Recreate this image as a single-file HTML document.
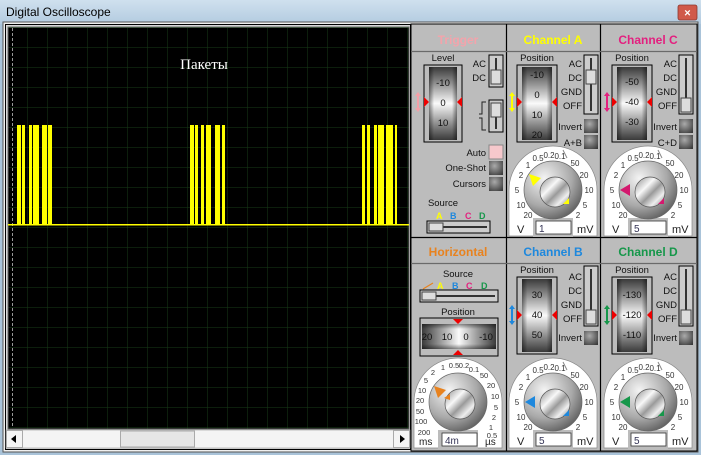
<!DOCTYPE html>
<html><head><meta charset="utf-8"><style>
html,body{margin:0;padding:0;width:701px;height:455px;overflow:hidden;background:#a8c2d8}
svg{display:block}
text{font-family:"Liberation Sans",sans-serif}
text.serif{font-family:"Liberation Serif","DejaVu Serif",serif}
</style></head><body>
<svg width="701" height="455" viewBox="0 0 701 455" xmlns="http://www.w3.org/2000/svg">
<defs>
<linearGradient id="tb" x1="0" y1="0" x2="0" y2="1"><stop offset="0" stop-color="#cfe0ee"/><stop offset="1" stop-color="#b3cbe0"/></linearGradient>
<linearGradient id="dv" x1="0" y1="0" x2="0" y2="1"><stop offset="0" stop-color="#3a3a3a"/><stop offset=".25" stop-color="#999"/><stop offset=".5" stop-color="#fafafa"/><stop offset=".75" stop-color="#999"/><stop offset="1" stop-color="#3a3a3a"/></linearGradient>
<linearGradient id="dh" x1="0" y1="0" x2="1" y2="0"><stop offset="0" stop-color="#3a3a3a"/><stop offset=".25" stop-color="#999"/><stop offset=".5" stop-color="#fafafa"/><stop offset=".75" stop-color="#999"/><stop offset="1" stop-color="#3a3a3a"/></linearGradient>
<linearGradient id="edge" x1="0" y1="0" x2="1" y2="0"><stop offset="0" stop-color="#000" stop-opacity=".45"/><stop offset=".18" stop-color="#000" stop-opacity="0"/><stop offset=".82" stop-color="#000" stop-opacity="0"/><stop offset="1" stop-color="#000" stop-opacity=".45"/></linearGradient>
<linearGradient id="edgev" x1="0" y1="0" x2="0" y2="1"><stop offset="0" stop-color="#000" stop-opacity=".45"/><stop offset=".2" stop-color="#000" stop-opacity="0"/><stop offset=".8" stop-color="#000" stop-opacity="0"/><stop offset="1" stop-color="#000" stop-opacity=".45"/></linearGradient>
<radialGradient id="kn" cx=".35" cy=".3" r=".8"><stop offset="0" stop-color="#f4f4f4"/><stop offset=".6" stop-color="#a8a8a8"/><stop offset="1" stop-color="#555"/></radialGradient>
<linearGradient id="kc" x1="0" y1="0" x2="1" y2="1"><stop offset="0" stop-color="#888"/><stop offset=".35" stop-color="#f8f8f8"/><stop offset=".55" stop-color="#9a9a9a"/><stop offset=".75" stop-color="#eee"/><stop offset="1" stop-color="#777"/></linearGradient>
<radialGradient id="btn" cx=".4" cy=".35" r=".8"><stop offset="0" stop-color="#aaa"/><stop offset="1" stop-color="#3a3a3a"/></radialGradient>
<pattern id="grid" width="20" height="20" patternUnits="userSpaceOnUse" x="8" y="8"><path d="M20 0V20M0 20H20" stroke="#173d17" stroke-width="1" fill="none"/></pattern>
<g id="vk">
 <path d="M-44 46V0A44 44 0 0 1 44 0V46Z" fill="#fff" stroke="#888" stroke-width=".7"/>
 <rect x="-20" y="28" width="40" height="19" fill="#bcbcbc"/>
 <path d="M10 -40 L14 -32" stroke="#888"/>
 <g font-size="8" text-anchor="middle" fill="#333">
 <text x="-25" y="28">20</text><text x="-32" y="18">10</text><text x="-36" y="3">5</text><text x="-32" y="-12">2</text><text x="-25" y="-22">1</text><text x="-15" y="-29">0.5</text><text x="-4" y="-32">0.2</text><text x="7" y="-31">0.1</text><text x="22" y="-24">50</text><text x="31" y="-12">20</text><text x="36" y="3">10</text><text x="32" y="18">5</text><text x="25" y="28">2</text>
 </g>
 <g font-size="11" fill="#222"><text x="-36" y="43">V</text><text x="24" y="43">mV</text></g>
 <circle r="29" fill="url(#kn)" stroke="#666" stroke-width=".7"/>
 <circle cx="2" cy="2" r="15" fill="url(#kc)" stroke="#555" stroke-width=".7"/>
 <rect x="-17" y="31" width="35" height="13" fill="#fff" stroke="#333" stroke-width=".8"/>
</g>
</defs>

<rect x="0" y="0" width="701" height="455" fill="#a9c3d9"/>
<rect x="0" y="0" width="701" height="24" fill="url(#tb)"/>
<text x="6" y="16" font-size="12" fill="#000">Digital Oscilloscope</text>
<rect x="678" y="5" width="19" height="15" rx="2" fill="#d0594a" stroke="#8a3a30" stroke-width=".8"/>
<text x="687.5" y="16.5" font-size="11" fill="#fff" text-anchor="middle" font-weight="bold">×</text>
<rect x="3" y="22" width="695" height="430" fill="#f0f0f0" stroke="#555" stroke-width="1"/>
<rect x="5.5" y="24.5" width="405" height="425" fill="#d8d8d8" stroke="#000" stroke-width="1"/>

<rect x="8" y="27" width="401" height="402" fill="#000"/>
<rect x="8" y="27" width="401" height="402" fill="url(#grid)"/>
<rect x="8" y="27" width="401" height="402" fill="none" stroke="#6a6a6a"/>
<line x1="12.5" y1="28" x2="12.5" y2="428" stroke="#999" stroke-dasharray="3 2"/>
<text class="serif" x="204" y="69" font-size="15" fill="#fff" text-anchor="middle">Пакеты</text>
<g fill="#ffff00">
<rect x="17" y="125" width="4" height="99"/><rect x="22" y="125" width="3" height="99"/><rect x="29" y="125" width="3" height="99"/><rect x="33" y="125" width="6" height="99"/><rect x="42" y="125" width="5" height="99"/><rect x="48" y="125" width="4" height="99"/>
<rect x="190" y="125" width="4" height="99"/><rect x="195" y="125" width="3" height="99"/><rect x="201" y="125" width="3" height="99"/><rect x="206" y="125" width="5" height="99"/><rect x="215" y="125" width="5" height="99"/><rect x="222" y="125" width="3" height="99"/>
<rect x="362" y="125" width="3" height="99"/><rect x="367" y="125" width="3" height="99"/><rect x="374" y="125" width="3" height="99"/><rect x="378" y="125" width="6" height="99"/><rect x="386" y="125" width="7" height="99"/><rect x="395" y="125" width="2" height="99"/>
<rect x="8" y="224" width="401" height="1.5"/>
</g>

<rect x="6" y="430" width="404" height="18" fill="#f4f4f4" stroke="#999" stroke-width=".6"/>
<rect x="6.5" y="430.5" width="16" height="17" fill="#f4f4f4" stroke="#aaa"/>
<path d="M11 439 L16 435 V443Z" fill="#000"/>
<rect x="393.5" y="430.5" width="16" height="17" fill="#f4f4f4" stroke="#aaa"/>
<path d="M405 439 L400 435 V443Z" fill="#000"/>
<rect x="120.5" y="431" width="74" height="16" fill="#e6e6e6" stroke="#aaa"/>

<rect x="411" y="24" width="286" height="427" fill="#bcbcbc" stroke="#000"/>
<g stroke="#000" stroke-width="1.2"><line x1="506.5" y1="24" x2="506.5" y2="451"/><line x1="600.5" y1="24" x2="600.5" y2="451"/><line x1="411" y1="237.5" x2="697" y2="237.5"/></g>
<g stroke="#6a6a6a" stroke-width="1.2"><line x1="411" y1="51.5" x2="697" y2="51.5"/><line x1="411" y1="263.5" x2="697" y2="263.5"/></g>
<g font-size="12" font-weight="bold" text-anchor="middle">
<text x="458" y="44" fill="#f4a3ab">Trigger</text>
<text x="553" y="44" fill="#ffff00">Channel A</text>
<text x="648" y="44" fill="#e3207f">Channel C</text>
<text x="458" y="256" fill="#e8821e">Horizontal</text>
<text x="553" y="256" fill="#1e88dd">Channel B</text>
<text x="648" y="256" fill="#16974a">Channel D</text>
</g>

<g font-size="9.5" fill="#111">
<text x="443" y="61" text-anchor="middle">Level</text>
<rect x="424" y="65" width="38" height="77" fill="#bcbcbc" stroke="#000"/>
<rect x="429" y="67" width="28" height="73" fill="url(#dv)"/><rect x="429" y="67" width="28" height="73" fill="url(#edge)"/>
<g text-anchor="middle"><text x="443" y="86">-10</text><text x="443" y="106">0</text><text x="443" y="126">10</text></g>
<path d="M424 97 L429 102 L424 107Z M462 97 L457 102 L462 107Z" fill="#e00"/>
<path d="M418 92 L421 96 H419 V108 H421 L418 112 L415 108 H417 V96 H415Z" fill="#f3a0a8"/>
<text x="486" y="67" text-anchor="end">AC</text><text x="486" y="81" text-anchor="end">DC</text>
<rect x="489" y="55" width="14" height="32" fill="#ccc" stroke="#000"/><line x1="496" y1="58" x2="496" y2="84" stroke="#000" stroke-width="1.5"/><rect x="491" y="70" width="10" height="14" fill="#ddd" stroke="#444"/>
<rect x="489" y="100" width="14" height="32" fill="#ccc" stroke="#000"/><line x1="496" y1="103" x2="496" y2="129" stroke="#000" stroke-width="1.5"/><rect x="491" y="103" width="10" height="14" fill="#ddd" stroke="#444"/>
<path d="M486 102 H482 V114 H479 M479 118 H482 V130 H486" fill="none" stroke="#222"/>
<text x="486" y="156" text-anchor="end">Auto</text><rect x="489" y="145" width="14" height="14" fill="#f6c8cc" stroke="#888"/>
<text x="486" y="171" text-anchor="end">One-Shot</text><rect x="489" y="161" width="14" height="14" fill="url(#btn)"/>
<text x="486" y="187" text-anchor="end">Cursors</text><rect x="489" y="177" width="14" height="14" fill="url(#btn)"/>
<text x="443" y="206" text-anchor="middle">Source</text>
<g font-size="9" font-weight="bold"><text x="436" y="219" fill="#ffff00">A</text><text x="450" y="219" fill="#1e88dd">B</text><text x="465" y="219" fill="#e3207f">C</text><text x="479" y="219" fill="#16974a">D</text></g>
<rect x="427" y="221" width="63" height="12" fill="#ccc" stroke="#000"/><line x1="430" y1="227" x2="487" y2="227" stroke="#000" stroke-width="1.5"/><rect x="429" y="223" width="14" height="8" fill="#ddd" stroke="#444"/>
</g>

<g font-size="9.5" fill="#111">
<text x="537" y="61" text-anchor="middle">Position</text>
<rect x="517" y="65" width="40" height="77" fill="#bcbcbc" stroke="#000"/>
<rect x="522" y="67" width="30" height="73" fill="url(#dv)"/><rect x="522" y="67" width="30" height="73" fill="url(#edge)"/>
<g text-anchor="middle"><text x="537" y="78">-10</text><text x="537" y="98">0</text><text x="537" y="118">10</text><text x="537" y="138">20</text></g>
<path d="M517 97 L522 102 L517 107Z M557 97 L552 102 L557 107Z" fill="#e00"/>
<path d="M512 92 L515 96 H513 V108 H515 L512 112 L509 108 H511 V96 H509Z" fill="#ffff00"/>
<g text-anchor="end"><text x="582" y="67">AC</text><text x="582" y="81">DC</text><text x="582" y="95">GND</text><text x="582" y="109">OFF</text><text x="582" y="130">Invert</text><text x="582" y="146">A+B</text></g>
<rect x="584" y="55" width="14" height="59" fill="#ccc" stroke="#000"/><line x1="591" y1="58" x2="591" y2="111" stroke="#000" stroke-width="1.5"/><rect x="586" y="70" width="10" height="14" fill="#ddd" stroke="#444"/>
<rect x="584" y="119" width="14" height="14" fill="url(#btn)"/><rect x="584" y="135" width="14" height="14" fill="url(#btn)"/>
</g>
<g transform="translate(553,190)"><use href="#vk"/>
<path d="M-24 -16 L-12 -12 L-20 -4Z" fill="#ffff00"/><path d="M10 14 L16 8 L16 14Z" fill="#ffff00"/>
<text x="-14" y="42" font-size="10" fill="#335">1</text></g>

<g font-size="9.5" fill="#111">
<text x="632" y="61" text-anchor="middle">Position</text>
<rect x="612" y="65" width="40" height="77" fill="#bcbcbc" stroke="#000"/>
<rect x="617" y="67" width="30" height="73" fill="url(#dv)"/><rect x="617" y="67" width="30" height="73" fill="url(#edge)"/>
<g text-anchor="middle"><text x="632" y="85">-50</text><text x="632" y="105">-40</text><text x="632" y="125">-30</text></g>
<path d="M612 97 L617 102 L612 107Z M652 97 L647 102 L652 107Z" fill="#e00"/>
<path d="M607 92 L610 96 H608 V108 H610 L607 112 L604 108 H606 V96 H604Z" fill="#e3207f"/>
<g text-anchor="end"><text x="677" y="67">AC</text><text x="677" y="81">DC</text><text x="677" y="95">GND</text><text x="677" y="109">OFF</text><text x="677" y="130">Invert</text><text x="677" y="146">C+D</text></g>
<rect x="679" y="55" width="14" height="59" fill="#ccc" stroke="#000"/><line x1="686" y1="58" x2="686" y2="111" stroke="#000" stroke-width="1.5"/><rect x="681" y="98" width="10" height="14" fill="#ddd" stroke="#444"/>
<rect x="679" y="119" width="14" height="14" fill="url(#btn)"/><rect x="679" y="135" width="14" height="14" fill="url(#btn)"/>
</g>
<g transform="translate(648,190)"><use href="#vk"/>
<path d="M-28 0 L-18 -6 L-18 6Z" fill="#d4186e"/><path d="M10 14 L16 8 L16 14Z" fill="#d4186e"/>
<text x="-14" y="42" font-size="10" fill="#335">5</text></g>

<g font-size="9.5" fill="#111">
<text x="458" y="277" text-anchor="middle">Source</text>
<path d="M423 289 L433 283" stroke="#e8821e" stroke-width="1.2"/>
<g font-size="9" font-weight="bold"><text x="437" y="289" fill="#ffff00">A</text><text x="452" y="289" fill="#1e88dd">B</text><text x="466" y="289" fill="#e3207f">C</text><text x="481" y="289" fill="#16974a">D</text></g>
<rect x="420" y="290" width="78" height="12" fill="#ccc" stroke="#000"/><line x1="423" y1="296" x2="495" y2="296" stroke="#000" stroke-width="1.5"/><rect x="422" y="292" width="14" height="8" fill="#ddd" stroke="#444"/>
<text x="458" y="315" text-anchor="middle">Position</text>
<rect x="420" y="318" width="78" height="38" fill="#bcbcbc" stroke="#000"/>
<rect x="422" y="324" width="74" height="25" fill="url(#dh)"/><rect x="422" y="324" width="74" height="25" fill="url(#edgev)"/>
<g text-anchor="middle"><text x="427" y="340">20</text><text x="447" y="340">10</text><text x="466" y="340">0</text><text x="486" y="340">-10</text></g>
<path d="M453 319 L463 319 L458 324Z M453 355 L463 355 L458 350Z" fill="#e00"/>
</g>
<g transform="translate(458,402)">
 <path d="M-44 46V0A44 44 0 0 1 44 0V46Z" fill="#fff" stroke="#888" stroke-width=".7"/>
 <rect x="-20" y="28" width="40" height="19" fill="#bcbcbc"/>
 <g font-size="7.5" text-anchor="middle" fill="#333">
 <text x="-34" y="33">200</text><text x="-37" y="22">100</text><text x="-38" y="12">50</text><text x="-38" y="1">20</text><text x="-36" y="-9">10</text><text x="-32" y="-19">5</text><text x="-25" y="-27">2</text><text x="-15" y="-32">1</text><text x="-4" y="-34">0.5</text><text x="6" y="-34">0.2</text><text x="16" y="-30">0.1</text><text x="26" y="-24">50</text><text x="33" y="-14">20</text><text x="37" y="-3">10</text><text x="38" y="8">5</text><text x="36" y="18">2</text><text x="33" y="28">1</text><text x="34" y="36">0.5</text>
 </g>
 <g font-size="10" fill="#222"><text x="-39" y="43">ms</text><text x="27" y="43">µs</text></g>
 <circle r="29" fill="url(#kn)" stroke="#666" stroke-width=".7"/>
 <circle cx="2" cy="2" r="15" fill="url(#kc)" stroke="#555" stroke-width=".7"/>
 <rect x="-16" y="31" width="35" height="13" fill="#fff" stroke="#333" stroke-width=".8"/>
 <path d="M-24 -16 L-12 -12 L-20 -4Z" fill="#e8821e"/><path d="M-14 -4 L-8 -8 L-8 -2Z" fill="#e8821e"/>
 <text x="-13" y="42" font-size="10" fill="#335">4m</text>
</g>

<g font-size="9.5" fill="#111">
<text x="537" y="273" text-anchor="middle">Position</text>
<rect x="517" y="277" width="40" height="77" fill="#bcbcbc" stroke="#000"/>
<rect x="522" y="279" width="30" height="73" fill="url(#dv)"/><rect x="522" y="279" width="30" height="73" fill="url(#edge)"/>
<g text-anchor="middle"><text x="537" y="298">30</text><text x="537" y="318">40</text><text x="537" y="338">50</text></g>
<path d="M517 310 L522 315 L517 320Z M557 310 L552 315 L557 320Z" fill="#e00"/>
<path d="M512 305 L515 309 H513 V321 H515 L512 325 L509 321 H511 V309 H509Z" fill="#1e88dd"/>
<g text-anchor="end"><text x="582" y="280">AC</text><text x="582" y="294">DC</text><text x="582" y="308">GND</text><text x="582" y="322">OFF</text><text x="582" y="341">Invert</text></g>
<rect x="584" y="266" width="14" height="60" fill="#ccc" stroke="#000"/><line x1="591" y1="269" x2="591" y2="323" stroke="#000" stroke-width="1.5"/><rect x="586" y="310" width="10" height="14" fill="#ddd" stroke="#444"/>
<rect x="584" y="331" width="14" height="14" fill="url(#btn)"/>
</g>
<g transform="translate(553,402)"><use href="#vk"/>
<path d="M-28 0 L-18 -6 L-18 6Z" fill="#1e88dd"/><path d="M10 14 L16 8 L16 14Z" fill="#1e88dd"/>
<text x="-14" y="42" font-size="10" fill="#335">5</text></g>

<g font-size="9.5" fill="#111">
<text x="632" y="273" text-anchor="middle">Position</text>
<rect x="612" y="277" width="40" height="77" fill="#bcbcbc" stroke="#000"/>
<rect x="617" y="279" width="30" height="73" fill="url(#dv)"/><rect x="617" y="279" width="30" height="73" fill="url(#edge)"/>
<g text-anchor="middle"><text x="632" y="298">-130</text><text x="632" y="318">-120</text><text x="632" y="338">-110</text></g>
<path d="M612 310 L617 315 L612 320Z M652 310 L647 315 L652 320Z" fill="#e00"/>
<path d="M607 305 L610 309 H608 V321 H610 L607 325 L604 321 H606 V309 H604Z" fill="#16974a"/>
<g text-anchor="end"><text x="677" y="280">AC</text><text x="677" y="294">DC</text><text x="677" y="308">GND</text><text x="677" y="322">OFF</text><text x="677" y="341">Invert</text></g>
<rect x="679" y="266" width="14" height="60" fill="#ccc" stroke="#000"/><line x1="686" y1="269" x2="686" y2="323" stroke="#000" stroke-width="1.5"/><rect x="681" y="310" width="10" height="14" fill="#ddd" stroke="#444"/>
<rect x="679" y="331" width="14" height="14" fill="url(#btn)"/>
</g>
<g transform="translate(648,402)"><use href="#vk"/>
<path d="M-28 0 L-18 -6 L-18 6Z" fill="#16974a"/><path d="M10 14 L16 8 L16 14Z" fill="#16974a"/>
<text x="-14" y="42" font-size="10" fill="#335">5</text></g>
</svg>
</body></html>
